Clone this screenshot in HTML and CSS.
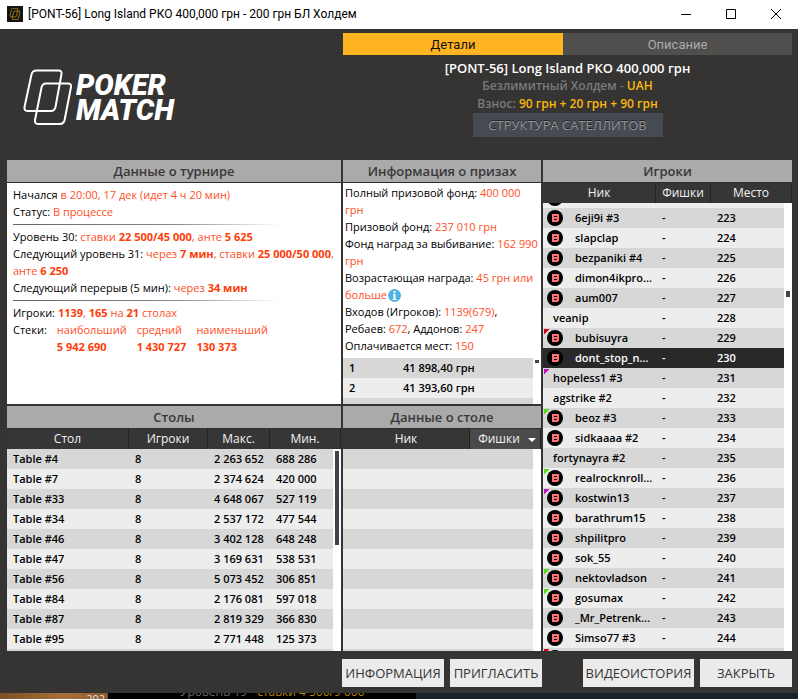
FILE: index.html
```html
<!DOCTYPE html>
<html lang="ru">

<head>
  <meta charset="UTF-8" />
  <meta name="viewport" content="width=device-width, initial-scale=1.0" />
  <title>[PONT-56] Long Island РКО 400,000 грн</title>
  <link rel="stylesheet" href="styles.css">
</head>

<body>
  <svg class="sprite" aria-hidden="true">
    <symbol id="cards" viewBox="0 0 50 57">
      <path d="M13.500 1.500H35.500Q39 1.500 38.500 5L32.500 38Q31.500 42 28 42H4.500Q1 42 1.500 38L8.500 5.500Q9.500 1.500 13.500 1.500Z" />
      <path d="M23 14.500H45Q48.500 14.500 48 18L41.500 51.500Q40.500 55 37 55H15Q11.500 55 12 51L18.500 18.500Q19.500 14.500 23 14.500Z" />
    </symbol>
    <symbol id="badge" viewBox="0 0 16 16">
      <circle cx="8" cy="8" r="8" fill="#000" />
      <path fill="#ff7074" fill-rule="evenodd" shape-rendering="crispEdges" d="M5 4H12V11H11V12H5ZM7 6V7H10V6ZM7 9V10H10V9Z" />
    </symbol>
  </svg>

  <div class="title-bar">
    <svg class="app-icon"><use href="#cards" x="2" y="2" width="12" height="12" /></svg>
    <span class="title">[PONT-56] Long Island РКО 400,000 грн - 200 грн БЛ Холдем</span>
    <button class="win-btn" aria-label="Свернуть"><svg viewBox="0 0 12 12"><path d="M1 6.500H11" /></svg></button>
    <button class="win-btn" aria-label="Развернуть"><svg viewBox="0 0 12 12"><path d="M1.500 1.500H10.500V10.500H1.500Z" /></svg></button>
    <button class="win-btn" aria-label="Закрыть"><svg viewBox="0 0 12 12"><path d="M1 1L11 11M11 1L1 11" /></svg></button>
  </div>

  <div class="lobby">
    <header>
      <div class="logo">
        <svg><use href="#cards" /></svg>
        <div class="logo-text">POKER<br>MATCH</div>
      </div>
      <div class="intro">
        <div class="tabs">
          <button class="tab active">Детали</button>
          <button class="tab">Описание</button>
        </div>
        <div class="name">[PONT-56] Long Island РКО 400,000 грн</div>
        <div class="sub">Безлимитный Холдем - <span>UAH</span></div>
        <div class="sub">Взнос: <span>90 грн + 20 грн + 90 грн</span></div>
        <button class="satellites">СТРУКТУРА САТЕЛЛИТОВ</button>
      </div>
    </header>

    <main>
      <section class="panel">
        <h2>Данные о турнире</h2>
        <div class="info">
          <div>Начался <em>в 20:00, 17 дек (идет 4 ч 20 мин)</em></div>
          <div>Статус: <em>В процессе</em></div>
          <hr>
          <div>Уровень 30: <em>ставки <b>22 500/45 000</b>, анте <b>5 625</b></em></div>
          <div>Следующий уровень 31: <em>через <b>7 мин</b>, ставки <b>25 000/50 000</b>, анте <b>6 250</b></em></div>
          <div>Следующий перерыв (5 мин): <em>через <b>34 мин</b></em></div>
          <hr>
          <div>Игроки: <em><b>1139</b>, <b>165</b> на <b>21</b> столах</em></div>
          <div class="stacks">
            <span>Стеки:</span>
            <em>наибольший<br><b>5 942 690</b></em>
            <em>средний<br><b>1 430 727</b></em>
            <em>наименьший<br><b>130 373</b></em>
          </div>
        </div>
      </section>

      <section class="panel">
        <h2>Информация о призах</h2>
        <div class="info prizes">
          <div>Полный призовой фонд: <em>400 000 грн</em></div>
          <div>Призовой фонд: <em>237 010 грн</em></div>
          <div>Фонд наград за выбивание: <em>162 990 грн</em></div>
          <div>Возрастающая награда: <em>45 грн или больше</em><svg class="hint" viewBox="0 0 13 13"><circle cx="6.500" cy="6.500" r="6.500" fill="#4fb4e4" /><path fill="#fff" d="M5.500 2H7.500V4H5.500ZM5 5H7.500V10H8.500V11H4.500V10H5.500V6H5Z" /></svg></div>
          <div>Входов (Игроков): <em>1139(679)</em>, Ребаев: <em>672</em>, Аддонов: <em>247</em></div>
          <div>Оплачивается мест: <em>150</em></div>
        </div>
        <div class="list">
          <table class="prize-table">
            <colgroup><col class="c-place"><col><col class="c-rail"></colgroup>
            <tbody>
              <tr><td>1</td><td>41 898,40 грн</td><td class="rail"></td></tr>
              <tr><td>2</td><td>41 393,60 грн</td><td class="rail"></td></tr>
              <tr><td></td><td></td><td class="rail"></td></tr>
            </tbody>
          </table>
          <div class="thumb thumb-prizes"></div>
        </div>
      </section>

      <section class="panel players">
        <h2>Игроки</h2>
        <div class="list" id="playersList">
          <table id="playersTable">
            <colgroup><col class="c-nick"><col class="c-chips"><col><col class="c-rail"></colgroup>
            <thead>
              <tr><th>Ник</th><th>Фишки</th><th colspan="2">Место</th></tr>
            </thead>
            <tbody></tbody>
          </table>
        </div>
        <div class="thumb thumb-players"></div>
      </section>

      <section class="panel">
        <h2>Столы</h2>
        <div class="list">
          <table id="tablesTable">
            <colgroup><col class="c-table"><col class="c-count"><col class="c-max"><col><col class="c-rail"></colgroup>
            <thead>
              <tr><th>Стол</th><th>Игроки</th><th>Макс.</th><th colspan="2">Мин.</th></tr>
            </thead>
            <tbody></tbody>
          </table>
          <div class="thumb thumb-tables"></div>
        </div>
      </section>

      <section class="panel">
        <h2>Данные о столе</h2>
        <div class="list">
          <table id="seatTable">
            <colgroup><col><col class="c-stack"><col class="c-rail"></colgroup>
            <thead>
              <tr><th>Ник</th><th class="sorted" colspan="2">Фишки<i class="arrow"></i></th></tr>
            </thead>
            <tbody></tbody>
          </table>
        </div>
      </section>
    </main>

    <footer>
      <button class="b-info">ИНФОРМАЦИЯ</button>
      <button class="b-invite">ПРИГЛАСИТЬ</button>
      <button class="b-video">ВИДЕОИСТОРИЯ</button>
      <button class="b-close">ЗАКРЫТЬ</button>
    </footer>
  </div>

  <div class="desktop">
    <div class="photo">202</div>
    <div class="ticker">Уровень 19 <span>ставки 4 500/9 000</span></div>
  </div>

  <script>
    // ник, есть ли значок, цвет метки
    const players = [
      ['', true],
      ['6eji9i #3', true],
      ['slapclap', true],
      ['bezpaniki #4', true],
      ['dimon4ikpro...', true],
      ['aum007', true],
      ['veanip', false],
      ['bubisuyra', true, 'red'],
      ['dont_stop_n...', true],
      ['hopeless1 #3', false, 'purple'],
      ['agstrike #2', false],
      ['beoz #3', true, 'green'],
      ['sidkaaaa #2', true],
      ['fortynayra #2', false],
      ['realrocknroll...', true, 'green'],
      ['kostwin13', true, 'purple'],
      ['barathrum15', true],
      ['shpilitpro', true],
      ['sok_55', true],
      ['nektovladson', true, 'green'],
      ['gosumax', true, 'green'],
      ['_Mr_Petrenk...', true],
      ['Simso77 #3', true],
      ['', true, 'red']
    ];

    const tables = [
      ['Table #4', '2 263 652', '688 286'],
      ['Table #7', '2 374 624', '420 000'],
      ['Table #33', '4 648 067', '527 119'],
      ['Table #34', '2 537 172', '477 544'],
      ['Table #46', '3 402 128', '648 248'],
      ['Table #47', '3 169 631', '538 531'],
      ['Table #56', '5 073 452', '306 851'],
      ['Table #84', '2 176 081', '597 018'],
      ['Table #87', '2 819 329', '366 830'],
      ['Table #95', '2 771 448', '125 373'],
      ['', '', '']
    ];

    const firstPlace = 222;
    const myPlace = 230;

    document.querySelector('#playersTable tbody').innerHTML = players.map(([nick, badge, mark], i) => `
      <tr class="${firstPlace + i === myPlace ? 'selected' : ''}">
        <td class="nick ${mark ? 'mark ' + mark : ''}">
          <div>${badge ? '<svg class="badge"><use href="#badge" /></svg>' : ''}<span>${nick}</span></div>
        </td>
        <td>${nick ? '-' : ''}</td>
        <td>${nick ? firstPlace + i : ''}</td>
        <td class="rail"></td>
      </tr>`).join('');

    document.querySelector('#tablesTable tbody').innerHTML = tables.map(([name, max, min]) => `
      <tr><td>${name}</td><td>${name ? 8 : ''}</td><td>${max}</td><td>${min}</td><td class="rail"></td></tr>`).join('');

    document.querySelector('#seatTable tbody').innerHTML =
      '<tr><td></td><td></td><td class="rail"></td></tr>'.repeat(11);

    document.getElementById('playersList').scrollTop = 15;
  </script>
</body>

</html>
```

FILE: styles.css
```css
* {
  box-sizing: border-box;
}

body {
  margin: 0;
  height: 100vh;
  display: flex;
  flex-direction: column;
  overflow: hidden;
  background: #353432;
  color: #000;
  font-family: "Open Sans", "Noto Sans", sans-serif;
  font-size: 11px;
}

button {
  border: none;
  padding: 0;
  font-family: inherit;
  cursor: pointer;
}

.sprite {
  display: none;
}

/* Заголовок окна */
.title-bar {
  flex: none;
  display: flex;
  align-items: center;
  height: 29px;
  padding-left: 7px;
  padding-bottom: 2px;
  background: #fff;
}

.app-icon {
  width: 16px;
  height: 16px;
  background: #141414;
  fill: none;
  stroke: #a8801c;
  stroke-width: 4;
}

.title {
  flex: 1;
  margin-left: 5px;
  font-family: Roboto, "Noto Sans", sans-serif;
  font-size: 12px;
}

.win-btn {
  width: 45px;
  height: 27px;
  background: #fff;
}

.win-btn svg {
  display: block;
  width: 12px;
  height: 12px;
  margin: 0 auto;
  fill: none;
  stroke: #000;
}

/* Шапка */
.lobby {
  flex: 1;
  min-height: 0;
  display: flex;
  flex-direction: column;
  padding: 0 6px 0 7px;
}

header {
  flex: none;
  display: grid;
  grid-template-columns: 336fr 449fr;
  height: 131px;
}

.logo {
  display: flex;
  align-items: center;
  gap: 3px;
  padding-top: 6px;
  padding-left: 16px;
}

.logo svg {
  width: 50px;
  height: 57px;
  fill: none;
  stroke: #fff;
  stroke-width: 2;
}

.logo-text {
  color: #fff;
  font-family: Roboto, sans-serif;
  font-size: 29px;
  font-style: italic;
  font-weight: 900;
  line-height: 25px;
}

.intro {
  padding-top: 4px;
  text-align: center;
}

.tabs {
  display: flex;
  margin-bottom: 4px;
}

.tab {
  flex: 229;
  height: 22px;
  background: #504f4d;
  color: #aaa;
  font-family: Roboto, sans-serif;
  font-size: 13px;
}

.tab.active {
  flex: 220;
  background: #ffb422;
  color: #111;
}

.name {
  color: #fff;
  font-size: 13px;
  font-weight: 600;
  line-height: 18px;
}

.sub {
  color: #777b80;
  font-size: 12px;
  font-weight: 600;
  line-height: 18px;
}

.sub span {
  color: #fab80c;
}

.satellites {
  width: 190px;
  height: 24px;
  background: #464a51;
  color: #92969c;
  font-size: 13px;
  text-shadow: 0 -1px #222;
}

/* Панели */
main {
  flex: 1;
  min-height: 0;
  display: grid;
  grid-template-columns: minmax(0, 334fr) minmax(0, 198fr) minmax(0, 249fr);
  grid-template-rows: 244px minmax(0, 1fr);
  gap: 2px;
}

.panel {
  position: relative;
  display: flex;
  flex-direction: column;
  min-height: 0;
  overflow: hidden;
  background: #fff;
}

.players {
  grid-column: 3;
  grid-row: 1 / 3;
}

h2 {
  flex: none;
  margin: 0;
  height: 23px;
  border-bottom: 1px solid #2e2e2e;
  background: #aaa;
  color: #383838;
  font-size: 13px;
  font-weight: 600;
  line-height: 22px;
  text-align: center;
}

.info {
  padding: 3px 6px;
  line-height: 17px;
}

.info.prizes {
  padding: 1px 2px 4px;
}

.info em {
  color: #ff4e1e;
  font-style: normal;
}

.info b {
  color: #ff3c08;
  font-weight: 700;
}

hr {
  width: 268px;
  height: 1px;
  margin: 4px 0 3px;
  border: none;
  background: linear-gradient(to right, #666, #888 60%, #fff);
}

.stacks {
  display: flex;
  gap: 10px;
}

.hint {
  width: 13px;
  height: 13px;
  margin-left: 1px;
  vertical-align: -3px;
}

/* Таблицы */
.list {
  position: relative;
  flex: 1;
  min-height: 0;
  overflow: hidden;
}

table {
  width: 100%;
  table-layout: fixed;
  border-collapse: separate;
  border-spacing: 0;
}

th {
  height: 20px;
  padding: 0;
  border-right: 1px solid #222;
  background: #363636;
  color: #f2f2f2;
  font-size: 12px;
  font-weight: 400;
  line-height: 18px;
}

thead {
  position: sticky;
  top: 0;
  z-index: 1;
}

td {
  height: 20px;
  padding: 0 0 0 6px;
  font-weight: 600;
  line-height: 18px;
  white-space: nowrap;
}

tbody tr {
  background: #ededed;
}

tbody tr:nth-child(odd) {
  background: #d7d7d7;
}

#playersTable tbody tr:nth-child(odd) {
  background: #ededed;
}

#playersTable tbody tr:nth-child(even) {
  background: #d7d7d7;
}

#playersTable tbody tr.selected {
  background: #292929;
  color: #fff;
}

tbody td.rail {
  background: #fff;
}

.c-rail {
  width: 8px;
}

.c-place {
  width: 54px;
}

.c-nick {
  width: 113px;
}

.c-chips {
  width: 55px;
}

.c-table {
  width: 122px;
}

.c-count {
  width: 79px;
}

.c-max {
  width: 62px;
}

.c-stack {
  width: 63px;
}

th.sorted {
  padding-left: 4px;
  background: #4a4a4a;
}

.arrow {
  display: inline-block;
  margin-left: 8px;
  border: 4px solid transparent;
  border-top-color: #fff;
  border-bottom: none;
  vertical-align: 1px;
}

td.nick {
  padding-left: 4px;
}

.nick div {
  display: flex;
  align-items: center;
  height: 20px;
}

.nick span {
  margin-left: 6px;
  line-height: 18px;
}

.badge {
  width: 16px;
  height: 16px;
}

.badge + span {
  margin-left: 12px;
}

/* Цветная метка в углу строки */
.mark {
  background: linear-gradient(135deg, var(--mark) 4px, transparent 4px) 1px 1px no-repeat;
}

.red {
  --mark: #d0021b;
}

.green {
  --mark: #50e010;
}

.purple {
  --mark: #c010c8;
}

.thumb {
  position: absolute;
  right: 2px;
  width: 4px;
  background: #3f444c;
}

.thumb-prizes {
  top: 2px;
  height: 3px;
}

.thumb-players {
  top: 131px;
  height: 6px;
}

.thumb-tables {
  top: 22px;
  height: 94px;
}

/* Нижние кнопки */
footer {
  flex: none;
  display: flex;
  justify-content: flex-end;
  gap: 6px;
  height: 42px;
  padding-top: 8px;
}

footer button {
  width: 92px;
  height: 28px;
  background: #ebebeb;
  color: #333;
  font-size: 13px;
}

footer .b-info {
  width: 102px;
}

footer .b-invite {
  margin-right: 35px;
}

footer .b-video {
  width: 111px;
}

/* Полоса рабочего стола под окном */
.desktop {
  flex: none;
  display: flex;
  height: 6px;
  overflow: hidden;
  background: #18222a;
}

.photo {
  width: 108px;
  padding-right: 2px;
  border-right: 1px solid #555;
  background: linear-gradient(to right, #7a5024, #a8703a 60%, #8c5a2c);
  color: #ddd;
  line-height: 12px;
  text-align: right;
}

.ticker {
  display: flex;
  align-items: flex-end;
  gap: 10px;
  width: 308px;
  padding-left: 72px;
  background: #000;
  color: #6a6a6a;
  font-size: 12px;
  line-height: 15px;
}

.ticker span {
  color: #b8860b;
}
```
